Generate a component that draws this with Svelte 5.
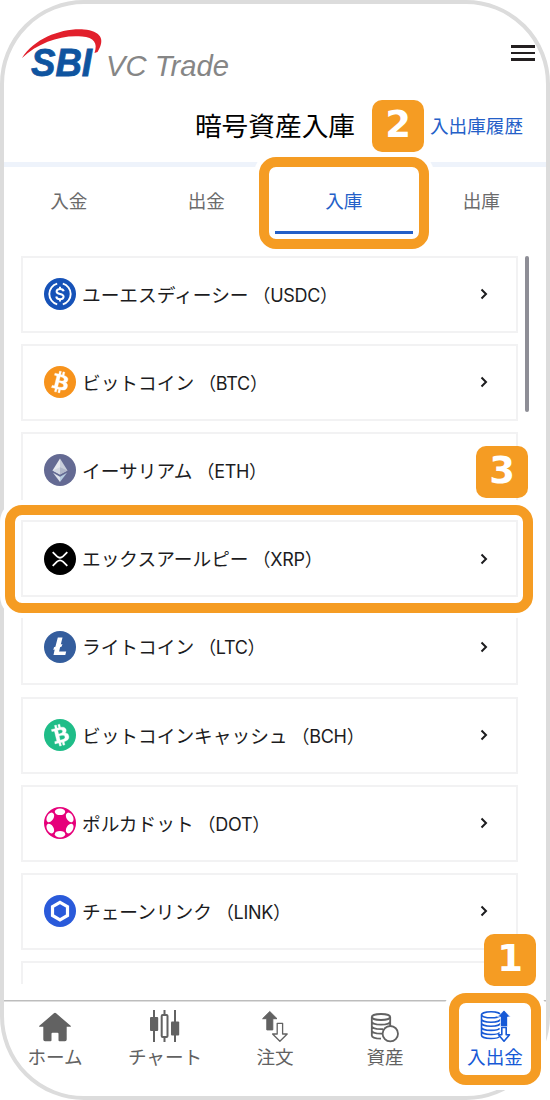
<script>
    let activeTab = $state("入庫");
    let activeNav = $state("入出金");

    const tabs = ["入金", "出金", "入庫", "出庫"];

    const coins = [
        { name: "ユーエスディーシー", code: "USDC", color: "#1652b8" },
        { name: "ビットコイン", code: "BTC", color: "#f7931c" },
        { name: "イーサリアム", code: "ETH", color: "#646a93" },
        { name: "エックスアールピー", code: "XRP", color: "#000000", step: 3 },
        { name: "ライトコイン", code: "LTC", color: "#345d9d" },
        { name: "ビットコインキャッシュ", code: "BCH", color: "#1fbd88" },
        { name: "ポルカドット", code: "DOT", color: "#e6007a" },
        { name: "チェーンリンク", code: "LINK", color: "#2a5ada" },
    ];

    const navItems = ["ホーム", "チャート", "注文", "資産", "入出金"];
</script>

{#snippet bitcoin()}
    <path
        fill="#fff"
        stroke="#fff"
        stroke-width="0.3"
        transform="translate(16 16) scale(1.1) translate(-16 -16)"
        d="M23.189 14.02c.314-2.096-1.283-3.223-3.465-3.975l.708-2.84-1.728-.43-.69 2.765c-.454-.114-.92-.22-1.385-.326l.695-2.783L15.596 6l-.708 2.839c-.376-.086-.746-.17-1.104-.26l.002-.009-2.384-.595-.46 1.846s1.283.294 1.256.312c.7.175.826.638.805 1.006l-.806 3.235c.048.012.11.03.18.057l-.183-.045-1.13 4.532c-.086.212-.303.531-.793.41.018.025-1.256-.313-1.256-.313l-.858 1.978 2.25.561c.418.105.828.215 1.231.318l-.715 2.872 1.727.43.708-2.84c.472.127.93.245 1.378.357l-.706 2.828 1.728.43.715-2.866c2.948.558 5.164.333 6.097-2.333.752-2.146-.037-3.385-1.588-4.192 1.13-.26 1.98-1.003 2.207-2.538zm-3.95 5.538c-.533 2.147-4.148.986-5.32.695l.95-3.805c1.172.293 4.929.872 4.37 3.11zm.535-5.569c-.487 1.953-3.495.96-4.47.717l.86-3.45c.975.243 4.118.696 3.61 2.733z"
    />
{/snippet}

{#snippet coinIcon(coin)}
    <svg class="coin-icon" viewBox="0 0 32 32">
        <circle cx="16" cy="16" r="16" fill={coin.color} />
        {#if coin.code === "USDC"}
            <path
                d="M13.2 5.6a10.8 10.8 0 0 0 0 20.8M18.8 5.6a10.8 10.8 0 0 1 0 20.8"
                fill="none"
                stroke="#fff"
                stroke-width="1.9"
            />
            <path
                d="M19.7 13.3c-.3-1.6-1.6-2.4-3.6-2.4-2.2 0-3.5 1-3.5 2.5 0 3.5 7 1.6 7 5.2 0 1.6-1.3 2.6-3.5 2.6-2.3 0-3.6-.9-3.9-2.7M16 8.7v2.2M16 21.2v2.2"
                fill="none"
                stroke="#fff"
                stroke-width="2"
            />
        {:else if coin.code === "BTC"}
            {@render bitcoin()}
        {:else if coin.code === "BCH"}
            <g transform="rotate(-28 16 16)">{@render bitcoin()}</g>
        {:else if coin.code === "ETH"}
            <path d="M16 4.5 8.5 16.5 16 20.5z" fill="#e6e8ee" />
            <path d="M16 4.5 23.5 16.5 16 20.5z" fill="#c9cedb" />
            <path d="M16 13.2 8.5 16.5 16 20.5z" fill="#d3d7e1" />
            <path d="M16 13.2 23.5 16.5 16 20.5z" fill="#b0b7c9" />
            <path d="M9 18.7 16 22.7V28z" fill="#dfe3ec" />
            <path d="M23 18.7 16 22.7V28z" fill="#b5cbe0" />
        {:else if coin.code === "XRP"}
            <path
                d="M8.7 9.2 13 13.4q3 2.7 6 0l4.3-4.2M8.7 22.9 13 18.7q3-2.7 6 0l4.3 4.2"
                fill="none"
                stroke="#fff"
                stroke-width="1.8"
            />
        {:else if coin.code === "LTC"}
            <path
                fill="#fff"
                d="M10.7 18.5 9.3 19l.7-2.7 1.4-.6 2.4-9.2h4.7l-1.7 7.1 1.6-.6-.7 2.6-1.6.6-1 4.4h7.1l-.9 3.5H9.5z"
            />
        {:else if coin.code === "DOT"}
            {#each [0, 60, 120, 180, 240, 300] as angle}
                <ellipse
                    cx="16"
                    cy="4.8"
                    rx="5.2"
                    ry="3.3"
                    fill="#fff"
                    transform="rotate({angle} 16 16)"
                />
            {/each}
        {:else if coin.code === "LINK"}
            <path
                d="M16 7.3 23.5 11.7v8.8L16 24.9 8.5 20.5v-8.8z"
                fill="none"
                stroke="#fff"
                stroke-width="3.2"
            />
        {/if}
    </svg>
{/snippet}

{#snippet navIcon(item)}
    <svg class="nav-icon" viewBox="0 0 32 32">
        {#if item === "ホーム"}
            <path
                fill="currentColor"
                d="M16 2.8q.6 0 1.1.5L31.6 15.8q.8 1-.4 1H27.7v12.7q0 1.8-1.7 1.8H20.5q-1 0-1-1v-6.5q0-1-1-1h-5q-1 0-1 1v6.5q0 1-1 1H6q-1.7 0-1.7-1.8V16.8H.8q-1.2 0-.4-1L14.9 3.3q.5-.5 1.1-.5z"
            />
        {:else if item === "チャート"}
            <g stroke="currentColor" stroke-width="2" fill="none">
                <path d="M5 0v32M15.5 0v4.5M15.5 28v4M26 0v32" />
                <rect x="12.7" y="5" width="5.8" height="22" rx="1" />
            </g>
            <rect x="1" y="7" width="8.2" height="14" rx="1" fill="currentColor" />
            <rect x="22" y="11.5" width="8.2" height="14" rx="1" fill="currentColor" />
        {:else if item === "注文"}
            <path
                fill="currentColor"
                stroke="currentColor"
                stroke-linejoin="round"
                d="M10.8 1.5 18 8.7h-4.2v11.2H7.8V8.7H3.6z"
            />
            <path
                d="M18.2 13.3h5.4V24h4.6L20.9 31.3 13.6 24h4.6z"
                fill="none"
                stroke="currentColor"
                stroke-width="1.3"
                stroke-linejoin="round"
            />
        {:else if item === "資産"}
            <g fill="none" stroke="currentColor" stroke-width="1.8">
                <ellipse cx="12" cy="7" rx="9.2" ry="3" />
                <path
                    d="M2.8 7v18.5c0 1.8 4 3.2 9.2 3.2M21.2 7v9M2.8 11.5c0 1.8 4 3.2 9.2 3.2s9.2-1.4 9.2-3.2M2.8 16c0 1.8 4 3.2 9.2 3.2h2M2.8 20.5c0 1.8 4 3.2 9.2 3.2h1"
                />
                <circle cx="21.3" cy="23.7" r="7.7" fill="#fff" />
            </g>
        {:else}
            <g fill="none" stroke="currentColor" stroke-width="1.6">
                <ellipse cx="12" cy="4.8" rx="9.5" ry="3" />
                <path
                    d="M2.5 4.8v20.5c0 1.8 4 3.2 9.5 3.2s8-1 8.5-2M2.5 9c0 1.8 4 3.2 9.5 3.2s9.5-1.4 9.5-3.2M2.5 13c0 1.8 4 3.2 9.5 3.2s9.5-1.4 9.5-3.2M2.5 17.2c0 1.8 4 3.2 9.5 3.2s8-1 8.5-2M2.5 21.3c0 1.8 4 3.2 9.5 3.2s8-1 8.5-2"
                />
            </g>
            <path
                fill="currentColor"
                stroke="#fff"
                stroke-width="0.8"
                d="M25 0 31.5 7h-2.9v9.7h-7.2V7h-2.9z"
            />
            <path
                d="M22.8 17.5h4.4v7.3h3.3L25 31.2l-5.5-6.4h3.3z"
                fill="#fff"
                stroke="currentColor"
                stroke-width="1.6"
                stroke-linejoin="round"
            />
        {/if}
    </svg>
{/snippet}

<div class="phone">
    <header class="topbar">
        <svg class="logo" width="212" height="54" viewBox="0 0 212 54">
            <path
                fill="#e2202c"
                d="M0 29C13 9 40-1 62 .5c16 1.5 22 9 13.5 22.5L72.5 24C76 14 72 8.5 60 7.5 40 5.5 17 13 0 29z"
            />
            <text
                class="logo-sbi"
                x="9"
                y="47"
                textLength="61"
                lengthAdjust="spacingAndGlyphs">SBI</text
            >
            <text
                class="logo-sub"
                x="84"
                y="47"
                textLength="123"
                lengthAdjust="spacingAndGlyphs">VC Trade</text
            >
        </svg>
        <button class="menu-btn" aria-label="メニュー">
            <span></span>
            <span></span>
            <span></span>
        </button>
    </header>

    <div class="title-row">
        <h1>暗号資産入庫</h1>
        <a class="history" href="#history">入出庫履歴</a>
    </div>

    <div class="tabs">
        {#each tabs as tab}
            <button
                class="tab"
                class:active={tab === activeTab}
                onclick={() => (activeTab = tab)}
            >
                {tab}
                {#if tab === "入庫"}
                    <span class="highlight"></span>
                    <span class="badge">2</span>
                {/if}
            </button>
        {/each}
    </div>

    <div class="list">
        {#each coins as coin}
            <div class="card">
                {@render coinIcon(coin)}
                <span class="coin-name">
                    {coin.name}<span class="code">（{coin.code}）</span>
                </span>
                <svg class="chevron" viewBox="0 0 8 12">
                    <path d="M1.5 1.5 6 6l-4.5 4.5" />
                </svg>
                {#if coin.step}
                    <span class="highlight"></span>
                    <span class="badge">{coin.step}</span>
                {/if}
            </div>
        {/each}
        <div class="card"></div>
        <div class="scrollbar"></div>
    </div>

    <nav class="bottom-nav">
        {#each navItems as item}
            <button
                class="nav-item"
                class:active={item === activeNav}
                onclick={() => (activeNav = item)}
            >
                {@render navIcon(item)}
                <span class="nav-label">{item}</span>
                {#if item === "入出金"}
                    <span class="highlight"></span>
                    <span class="badge">1</span>
                {/if}
            </button>
        {/each}
    </nav>
</div>

<style>
    :global(body) {
        background: #fff;
    }

    .phone {
        box-sizing: border-box;
        width: 550px;
        height: 1100px;
        border: 4px solid #dcdcdc;
        border-radius: 84px;
        background: #fff;
        display: flex;
        flex-direction: column;
        font-family: Inter, "Noto Sans CJK JP", sans-serif;
        color: #1c1c1e;
    }

    button {
        border: none;
        background: none;
        padding: 0;
        font: inherit;
        color: inherit;
        cursor: pointer;
    }

    .topbar {
        box-sizing: border-box;
        height: 86px;
        padding: 25px 11px 0 18px;
        display: flex;
        justify-content: space-between;
        align-items: flex-start;
    }

    .logo {
        overflow: visible;
    }

    .logo-sbi {
        font: italic bold 38px "Liberation Sans", sans-serif;
        fill: #0f549f;
        stroke: #0f549f;
        stroke-width: 0.8px;
    }

    .logo-sub {
        font: italic 30px "Liberation Sans", sans-serif;
        fill: #868686;
    }

    .menu-btn {
        width: 24px;
        margin-top: 16px;
        display: flex;
        flex-direction: column;
        gap: 4px;
    }

    .menu-btn span {
        height: 2.6px;
        background: #231f20;
    }

    .title-row {
        height: 72px;
        padding: 0 23px;
        border-bottom: 5px solid #eef3fb;
        display: grid;
        grid-template-columns: 1fr auto 1fr;
        align-items: center;
    }

    h1 {
        grid-column: 2;
        margin: 0;
        font-size: 26.7px;
        font-weight: 400;
        line-height: 1;
        color: #000;
    }

    .history {
        justify-self: end;
        font-size: 18.6px;
        line-height: 1;
        color: #2460c8;
        text-decoration: none;
    }

    /* Tabs */
    .tabs {
        display: flex;
        margin: 0 -4px;
        height: 67px;
    }

    .tab {
        position: relative;
        box-sizing: border-box;
        flex: 1;
        border-bottom: 3px solid transparent;
        font-size: 18.6px;
        color: #6b6b6b;
    }

    .tab.active {
        border-bottom-color: #2460c8;
        color: #2460c8;
    }

    /* Coin list */
    .list {
        position: relative;
        flex: none;
        box-sizing: border-box;
        height: 728.4px;
        margin: 21.6px -4px 16px;
        padding: 0 32px 0 21px;
        display: flex;
        flex-direction: column;
        gap: 11.2px;
        overflow: hidden;
    }

    .card {
        position: relative;
        box-sizing: border-box;
        flex: none;
        height: 77px;
        padding: 0 28px 0 21px;
        border: 2px solid #f2f2f3;
        display: flex;
        align-items: center;
    }

    .coin-icon {
        width: 32px;
        height: 32px;
        margin-right: 6px;
    }

    .coin-name {
        flex: 1;
        padding-top: 4px;
        font-size: 18.7px;
        line-height: 1;
        white-space: nowrap;
    }

    .code {
        margin-left: 4px;
        font-size: 18px;
        letter-spacing: -0.3px;
    }

    .chevron {
        width: 8px;
        height: 12px;
    }

    .chevron path {
        fill: none;
        stroke: #1c1c1e;
        stroke-width: 2;
    }

    .scrollbar {
        position: absolute;
        top: 0;
        right: 21px;
        width: 4px;
        height: 156px;
        border-radius: 2px;
        background: #8e8e96;
    }

    /* Bottom navigation */
    .bottom-nav {
        flex: 1;
        margin: 0 -4px;
        display: flex;
        background: linear-gradient(#bdbdbd, #bdbdbd) 4px 0 / 542px 1.5px no-repeat;
    }

    .nav-item {
        position: relative;
        flex: 1;
        display: flex;
        flex-direction: column;
        align-items: center;
        padding-top: 10px;
        color: #626262;
    }

    .nav-item.active {
        color: #1659d6;
    }

    .nav-icon {
        position: relative;
        z-index: 2;
        width: 32px;
        height: 32px;
        overflow: visible;
    }

    .nav-label {
        position: relative;
        z-index: 2;
        margin-top: 6px;
        font-size: 18.6px;
        line-height: 1;
    }

    /* Step markers */
    .highlight {
        position: absolute;
        z-index: 1;
        border: 10px solid #f59c23;
        border-radius: 17px;
        box-shadow: 0 0 0 5px #fff;
        pointer-events: none;
    }

    .tab .highlight {
        inset: -10px -16.5px -18px -16px;
    }

    .card .highlight {
        inset: -17px -17px -18px -18px;
    }

    .nav-item .highlight {
        inset: -7px 9px 11px 9px;
        background: #fff;
    }

    .badge {
        position: absolute;
        z-index: 2;
        width: 52px;
        height: 52px;
        border-radius: 10px;
        background: #f59c23;
        color: #fff;
        font: bold 37px/50px "DejaVu Sans", sans-serif;
        text-align: center;
    }

    .tab .badge {
        top: -67px;
        left: 97px;
    }

    .card .badge {
        top: -76px;
        right: -12px;
    }

    .nav-item .badge {
        top: -66px;
        right: 14px;
    }
</style>
